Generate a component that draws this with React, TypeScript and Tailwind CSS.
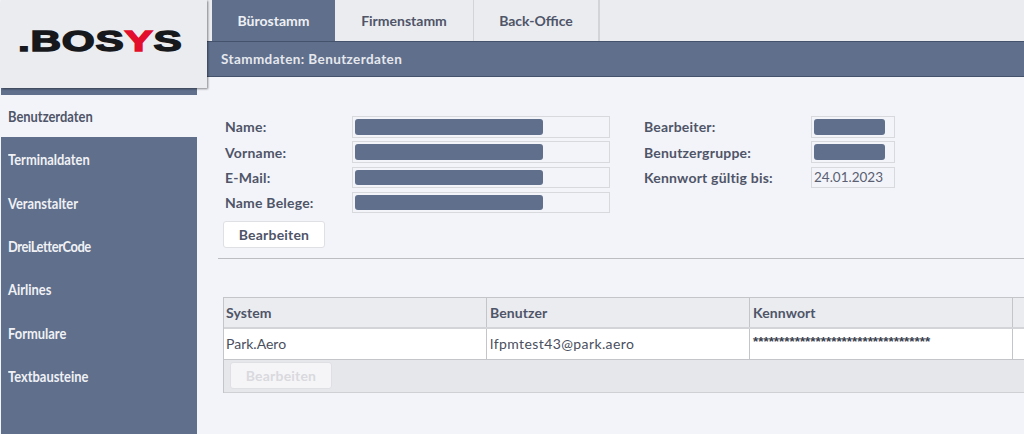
import React from 'react';

const sideItems = [
    { name: 'Terminaldaten', cls: 'tracking-[0px]' },
    { name: 'Veranstalter', cls: 'tracking-[0px]' },
    { name: 'DreiLetterCode', cls: 'tracking-[-0.5px]' },
    { name: 'Airlines', cls: 'tracking-[0px]' },
    { name: 'Formulare', cls: 'tracking-[0px]' },
    { name: 'Textbausteine', cls: 'tracking-[0px]' },
];

const Field: React.FC<{ label: string; width: string; labelWidth: string; bar?: string; value?: string }> = ({
    label,
    width,
    labelWidth,
    bar,
    value,
}) => (
    <div className="flex items-center h-[21.5px]">
        <span className={`${labelWidth} text-[14px] tracking-[0.2px] font-bold text-[#4f5568]`}>{label}</span>
        <div className={`${width} h-full border border-[#d8d9dd] pl-[2px] py-[2px] flex items-center text-[13.5px] text-[#5a6072]`}>
            {bar && <div className={`${bar} h-full rounded-[3px] bg-[#5f6f8c]`}></div>}
            {value}
        </div>
    </div>
);

export default function App() {
    return (
        <div className="w-[1024px] h-[434px] flex overflow-hidden bg-[#f3f4f9] font-['Lato',sans-serif]">
            {/* linke Spalte */}
            <div className="w-[207px] shrink-0 pl-[1px] flex flex-col">
                <div className="relative z-10 w-[206px] h-[88px] bg-[#ebecf0] shadow-[1px_1px_2px_rgba(0,0,0,0.45)] flex items-center pl-[17px] pb-[6px]">
                    <span className="font-['Liberation_Sans',sans-serif] font-bold text-[29px] leading-none text-[#17181c] tracking-[0.5px] inline-block origin-left scale-x-[1.46] [-webkit-text-stroke:1.4px_#17181c]">
                        .BOS<span className="text-[#e30d2c] [-webkit-text-stroke:1.4px_#e30d2c]">Y</span>S
                    </span>
                </div>
                <div className="w-[196px] flex-1 flex flex-col bg-[#5f6f8c]">
                    <div className="h-[7px]"></div>
                    <div className="h-[42px] bg-[#f3f4f9] flex items-center pl-[7px] pt-[1px] text-[15px] font-bold text-[#4f5568]">
                        <span className="inline-block origin-left scale-x-[0.86]">Benutzerdaten</span>
                    </div>
                    {sideItems.map((item) => (
                        <div key={item.name} className="h-[43.3px] shrink-0 flex items-center pl-[7px] pt-[2px] text-[15px] font-bold text-[#f0f1f5]">
                            <span className={`inline-block origin-left scale-x-[0.86] ${item.cls}`}>{item.name}</span>
                        </div>
                    ))}
                </div>
            </div>

            {/* Inhalt */}
            <div className="flex-1 flex flex-col min-w-0">
                <div className="h-[41px] bg-[#ebecf0] pl-[5px] flex shrink-0">
                    <div className="w-[123px] bg-[#5f6f8c] text-[#eef0f4] text-[14px] font-bold flex items-center justify-center">Bürostamm</div>
                    <div className="w-[139px] border-r border-[#d3d4d8] text-[#4f5568] text-[14px] font-bold flex items-center justify-center">Firmenstamm</div>
                    <div className="w-[126px] border-r-2 border-[#d3d4d8] text-[#4f5568] text-[14px] font-bold flex items-center justify-center">Back-Office</div>
                </div>
                <div className="h-[36px] bg-[#5f6f8c] border-t border-b border-[#45526b] flex items-center pl-[14px] text-[13.5px] font-bold text-[#e6e8ee] tracking-[0.4px] shrink-0">
                    Stammdaten: Benutzerdaten
                </div>

                <div className="flex pl-[18px] pt-[39px] shrink-0">
                    <div className="w-[419px] flex flex-col gap-[3.8px]">
                        <Field label="Name:" labelWidth="w-[127px]" width="w-[258px]" bar="w-[188px]" />
                        <Field label="Vorname:" labelWidth="w-[127px]" width="w-[258px]" bar="w-[188px]" />
                        <Field label="E-Mail:" labelWidth="w-[127px]" width="w-[258px]" bar="w-[188px]" />
                        <Field label="Name Belege:" labelWidth="w-[127px]" width="w-[258px]" bar="w-[188px]" />
                    </div>
                    <div className="flex flex-col gap-[3.8px]">
                        <Field label="Bearbeiter:" labelWidth="w-[167px]" width="w-[84px]" bar="w-[71px]" />
                        <Field label="Benutzergruppe:" labelWidth="w-[167px]" width="w-[84px]" bar="w-[71px]" />
                        <Field label="Kennwort gültig bis:" labelWidth="w-[167px]" width="w-[84px]" value="24.01.2023" />
                    </div>
                </div>

                <div className="pl-[16px] pt-[7.6px] shrink-0">
                    <button className="w-[102px] h-[27px] bg-white border border-[#dfe0e4] rounded-[3px] text-[14px] tracking-[0.2px] font-bold text-[#4f5568]">
                        Bearbeiten
                    </button>
                </div>

                <div className="ml-[11px] mt-[10px] border-t border-[#bcbdc1] shrink-0"></div>

                <div className="ml-[16px] mt-[38px] shrink-0 border-t border-l border-[#c4c5c9]">
                    <div className="flex h-[31px] bg-[#ebecf0] border-b-2 border-[#d3d4d8] text-[14px] tracking-[0.1px] font-bold text-[#4f5568]">
                        <div className="w-[263px] border-r border-[#c4c5c9] pl-[2px] flex items-center">System</div>
                        <div className="w-[263px] border-r border-[#c4c5c9] pl-[3px] flex items-center">Benutzer</div>
                        <div className="w-[263px] border-r border-[#c4c5c9] pl-[3px] flex items-center">Kennwort</div>
                        <div className="flex-1"></div>
                    </div>
                    <div className="flex h-[31px] bg-white border-b border-[#c4c5c9] text-[14px] text-[#4a4f5e]">
                        <div className="w-[263px] border-r border-[#c4c5c9] pl-[2px] flex items-center">Park.Aero</div>
                        <div className="w-[263px] border-r border-[#c4c5c9] pl-[3px] flex items-center tracking-[0.4px]">lfpmtest43@park.aero</div>
                        <div className="w-[263px] border-r border-[#c4c5c9] pl-[3px] pb-[3px] flex items-center text-[13.4px] font-bold font-['Liberation_Sans',sans-serif] text-[#3a3f4e] overflow-hidden">
                            **********************************
                        </div>
                        <div className="flex-1"></div>
                    </div>
                    <div className="h-[33px] bg-[#e6e7eb] border-b border-[#cfd0d4] pl-[6px] pt-[2px]">
                        <button className="w-[102px] h-[27px] bg-[#f5f5f7] border border-[#dfe0e4] rounded-[3px] text-[14px] tracking-[0.2px] font-bold text-[#d9d9de]">
                            Bearbeiten
                        </button>
                    </div>
                </div>
            </div>
        </div>
    );
}
